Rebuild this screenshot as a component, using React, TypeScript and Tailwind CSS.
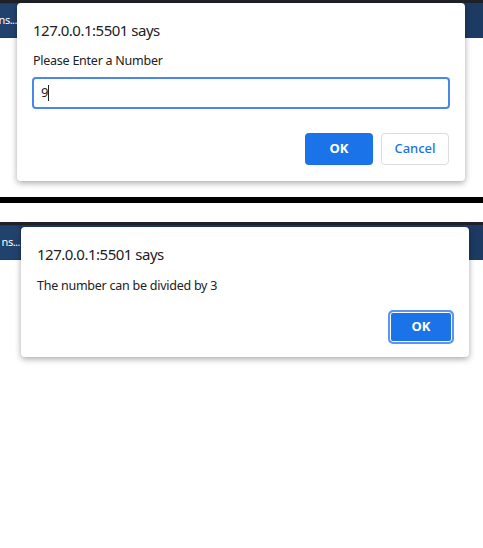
import React from "react";

const font = { fontFamily: '"Noto Sans", "Open Sans", Arial, sans-serif' };

function HeaderBar({ tabWidth }: { tabWidth: string }) {
  return (
    <div className="h-[38px] bg-[#1d3a63] border-t-[3px] border-[#1f2128]">
      <div
        className={`${tabWidth} h-[33px] mt-[1px] bg-[#22426e] rounded-tr-[4px] flex items-center justify-end text-[11px] tracking-[-0.5px] text-white overflow-hidden`}
      >
        <span>ns...</span>
      </div>
    </div>
  );
}

function PromptDialog() {
  return (
    <div className="absolute left-[17px] top-[3px] w-[448px] h-[178px] bg-white rounded-[4px] shadow-[0_2px_6px_rgba(0,0,0,0.35)] px-[16px] pt-[17px]">
      <div className="text-[15px] leading-[20px] tracking-[-0.5px] text-[#202124]">127.0.0.1:5501 says</div>
      <div className="mt-[13px] text-[12.5px] leading-[16px] tracking-[-0.25px] text-[#202124]">Please Enter a Number</div>
      <div className="mt-[8px] -ml-[1px] h-[32px] w-[418px] border-2 border-[#4a86ec] rounded-[4px] flex items-center pl-[7px] text-[13px] text-[#202124]">
        9<span className="inline-block w-[1px] h-[16px] bg-[#202124]" />
      </div>
      <div className="mt-[24px] flex justify-end gap-[8px] w-[416px]">
        <button className="w-[68px] h-[32px] rounded-[4px] bg-[#1a73e8] text-white text-[13px] font-bold">
          OK
        </button>
        <button className="w-[68px] h-[32px] rounded-[4px] bg-white border border-[#dadce0] text-[#1a73e8] text-[13px] font-medium">
          Cancel
        </button>
      </div>
    </div>
  );
}

function AlertDialog() {
  return (
    <div className="absolute left-[21px] top-[5px] w-[448px] h-[130px] bg-white rounded-[4px] shadow-[0_2px_6px_rgba(0,0,0,0.35)] px-[16px] pt-[17px]">
      <div className="text-[15px] leading-[20px] tracking-[-0.5px] text-[#202124]">127.0.0.1:5501 says</div>
      <div className="mt-[14px] text-[12.5px] leading-[16px] tracking-[-0.25px] text-[#202124]">The number can be divided by 3</div>
      <div className="mt-[16px] flex justify-end -mr-[1px]">
        <button className="w-[66px] h-[34px] rounded-[5px] bg-[#1a73e8] text-white text-[13px] font-bold border-2 border-[#5b95ef] outline outline-1 -outline-offset-[3px] outline-white">
          OK
        </button>
      </div>
    </div>
  );
}

export default function App() {
  return (
    <div className="w-[483px] h-[548px] bg-white overflow-hidden" style={font}>
      <div className="relative h-[197px]">
        <HeaderBar tabWidth="w-[17px]" />
        <PromptDialog />
      </div>
      <div className="h-[6px] bg-black" />
      <div className="pt-[19px]">
        <div className="relative h-[140px]">
          <HeaderBar tabWidth="w-[20px]" />
          <AlertDialog />
        </div>
      </div>
    </div>
  );
}
